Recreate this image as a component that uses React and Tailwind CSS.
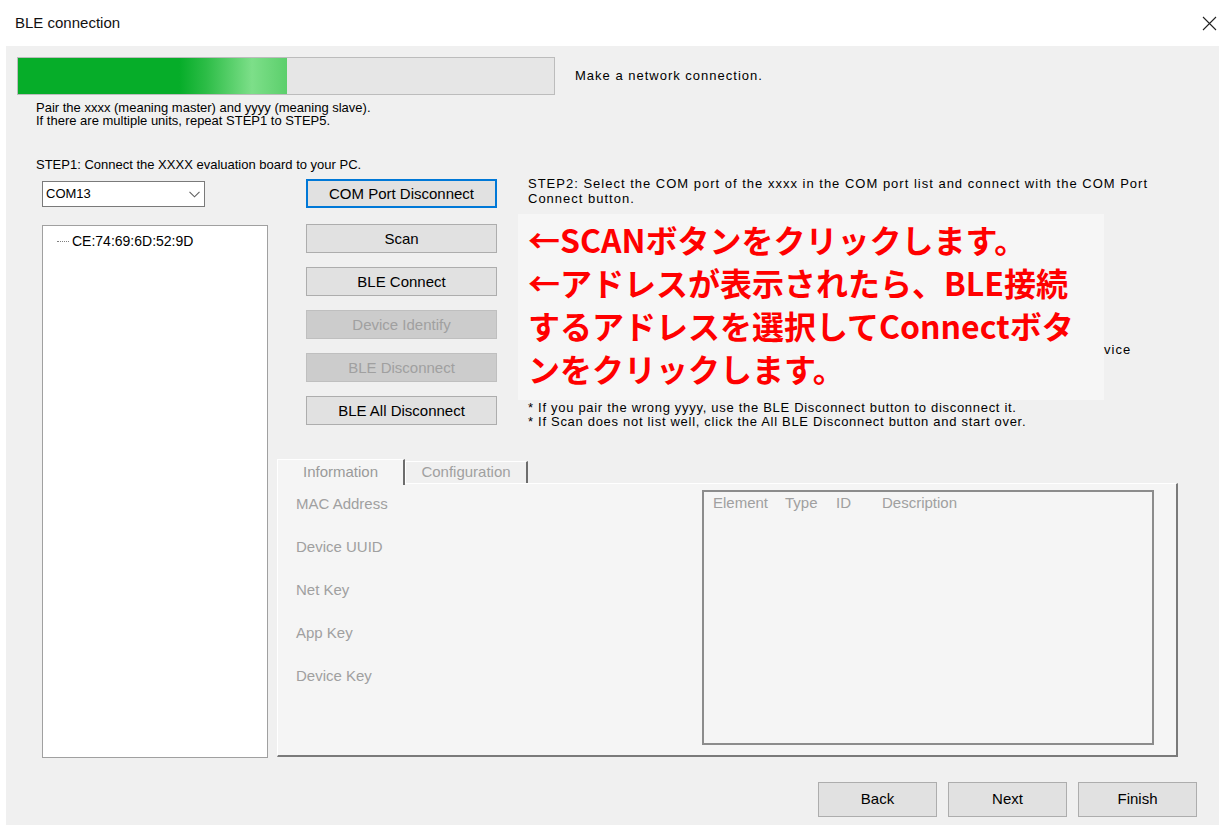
import { useState } from 'react'

const btn =
  'flex h-[29px] w-[191px] items-center justify-center border text-[15px] leading-none'
const enabledBtn = `${btn} border-[#adadad] bg-[#e1e1e1] text-black`
const disabledBtn = `${btn} border-[#bfbfbf] bg-[#cccccc] text-[#a0a0a0]`

function Chevron() {
  return (
    <svg width="11" height="7" viewBox="0 0 11 7" className="text-[#606060]">
      <path d="M0.5 0.8 L5.5 5.8 L10.5 0.8" fill="none" stroke="currentColor" strokeWidth="1.1" />
    </svg>
  )
}

function CloseIcon() {
  return (
    <svg width="15" height="15" viewBox="0 0 15 15" className="text-[#222]">
      <path d="M1 1 L14 14 M14 1 L1 14" stroke="currentColor" strokeWidth="1.1" />
    </svg>
  )
}

export default function App() {
  const [tab, setTab] = useState('info')
  const labels = ['MAC Address', 'Device UUID', 'Net Key', 'App Key', 'Device Key']

  return (
    <div className="flex h-[825px] w-[1219px] flex-col overflow-hidden bg-white font-['Liberation_Sans',Arial,sans-serif] text-black">
      {/* Title bar */}
      <div className="flex h-[46px] shrink-0 items-center justify-between pl-[15px] pr-[2px]">
        <span className="text-[15px] text-[#111]">BLE connection</span>
        <CloseIcon />
      </div>

      {/* Dialog body */}
      <div className="ml-[6px] flex flex-1 flex-col bg-[#f0f0f0]">
        {/* Progress */}
        <div className="mt-[11px] ml-[11px] flex items-center">
          <div className="h-[38px] w-[538px] border border-[#bcbcbc] bg-[#e6e6e6]">
            <div className="h-full w-[269px] bg-[linear-gradient(90deg,#06ad29_0%,#06ad29_60%,#2dbd47_70%,#7ddf89_87%,#5ccf6c_100%)]" />
          </div>
          <span className="ml-[20px] text-[13px] tracking-[1px]">Make a network connection.</span>
        </div>

        <div className="mt-[6px] ml-[30px] text-[13px] leading-[13px]">
          <p>Pair the xxxx (meaning master) and yyyy (meaning slave).</p>
          <p>If there are multiple units, repeat STEP1 to STEP5.</p>
        </div>

        <p className="mt-[31px] ml-[30px] text-[13px] leading-[13px]">
          STEP1: Connect the XXXX evaluation board to your PC.
        </p>

        {/* Main area */}
        <div className="mt-[8px] flex items-start">
          {/* Port select and device list */}
          <div className="ml-[36px] flex w-[226px] flex-col">
            <div className="mt-[2px] flex h-[26px] w-[163px] items-center justify-between border border-[#7a7a7a] bg-white pr-[4px] pl-[3px] text-[13px]">
              <span>COM13</span>
              <Chevron />
            </div>
            <div className="mt-[18px] h-[533px] w-[226px] border border-[#a0a0a0] bg-white pt-[5px] pl-[14px]">
              <div className="flex items-center text-[14px]">
                <span className="mr-[3px] w-[12px] border-t border-dotted border-[#808080]" />
                <span>CE:74:69:6D:52:9D</span>
              </div>
            </div>
          </div>

          <div className="ml-[9px] flex w-[901px] flex-col">
            <div className="flex h-[280px]">
              {/* Action buttons */}
              <div className="ml-[29px] flex w-[191px] flex-col">
                <button className={`${btn} border-2 border-[#0078d7] bg-[#e1e1e1]`}>COM Port Disconnect</button>
                <button className={`${enabledBtn} mt-[16px]`}>Scan</button>
                <button className={`${enabledBtn} mt-[14px]`}>BLE Connect</button>
                <button className={`${disabledBtn} mt-[14px]`} disabled>Device Identify</button>
                <button className={`${disabledBtn} mt-[14px]`} disabled>BLE Disconnect</button>
                <button className={`${enabledBtn} mt-[14px]`}>BLE All Disconnect</button>
              </div>

              {/* Instructions */}
              <div className="ml-[31px] flex flex-col">
                <p className="-mt-[3px] text-[13px] leading-[15px] tracking-[1px] whitespace-nowrap">
                  STEP2: Select the COM port of the xxxx in the COM port list and connect with the COM Port
                  <br />
                  Connect button.
                </p>
                <div className="mt-[8px] flex items-start">
                  <div className="-ml-[10px] h-[186px] w-[586px] bg-[#f6f6f6] pt-[4px] pl-[10px] font-['Noto_Sans_CJK_JP',sans-serif] text-[32px] font-bold leading-[43px] whitespace-nowrap text-[#ff0000]">
                    <p>←SCANボタンをクリックします。</p>
                    <p>←アドレスが表示されたら、BLE接続</p>
                    <p>するアドレスを選択してConnectボタ</p>
                    <p>ンをクリックします。</p>
                  </div>
                  <span className="mt-[126px] text-[13px] tracking-[1px]">vice</span>
                </div>
                <div className="mt-[1px] text-[13px] leading-[14px] tracking-[0.7px] whitespace-nowrap">
                  <p>* If you pair the wrong yyyy, use the BLE Disconnect button to disconnect it.</p>
                  <p>* If Scan does not list well, click the All BLE Disconnect button and start over.</p>
                </div>
              </div>
            </div>

            {/* Tabs */}
            <div className="flex h-[24px] items-end">
              <button
                onClick={() => setTab('info')}
                className="relative z-10 -mb-[2px] flex h-[26px] w-[128px] items-center justify-center border-t border-l border-white border-r-2 border-r-[#6d6d6d] bg-[#f5f5f5] text-[15px] text-[#9a9a9a]"
              >
                Information
              </button>
              <button
                onClick={() => setTab('config')}
                className="flex h-[22px] w-[123px] items-center justify-center border-t border-l border-white border-r-2 border-r-[#6d6d6d] bg-[#f0f0f0] text-[15px] text-[#a0a0a0]"
              >
                Configuration
              </button>
            </div>
            <div className="flex h-[274px] border-t border-l border-white border-r-2 border-b-2 border-r-[#7a7a7a] border-b-[#7a7a7a] bg-[#f5f5f5]">
              <div className="flex flex-1 flex-col gap-[23px] pt-[10px] pl-[18px]">
                {tab === 'info' &&
                  labels.map((l) => (
                    <span key={l} className="text-[15px] leading-[20px] text-[#a0a0a0]">
                      {l}
                    </span>
                  ))}
              </div>
              <div className="mt-[6px] mr-[22px] h-[255px] w-[452px] border-2 border-[#8c8c8c] bg-[#f5f5f5] pt-[1px] pl-[9px]">
                <div className="flex text-[15px] leading-[20px] text-[#a0a0a0]">
                  <span className="w-[72px]">Element</span>
                  <span className="w-[51px]">Type</span>
                  <span className="w-[46px]">ID</span>
                  <span>Description</span>
                </div>
              </div>
            </div>
          </div>
        </div>

        {/* Wizard navigation */}
        <div className="mt-[24px] flex justify-end gap-[11px] pr-[22px]">
          {['Back', 'Next', 'Finish'].map((t) => (
            <button
              key={t}
              className="flex h-[35px] w-[119px] items-center justify-center border border-[#adadad] bg-[#e1e1e1] text-[15px]"
            >
              {t}
            </button>
          ))}
        </div>
      </div>
    </div>
  )
}
